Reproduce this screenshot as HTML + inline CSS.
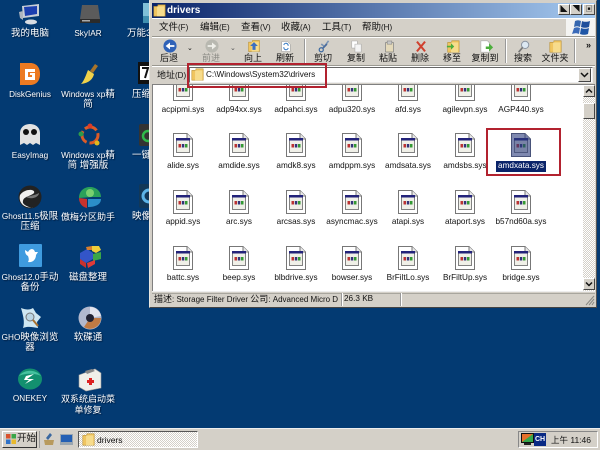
<!DOCTYPE html>
<html><head><meta charset="utf-8"><style>
html,body{margin:0;padding:0;width:600px;height:450px;overflow:hidden;background:#033a72}
#r{position:relative;width:600px;height:450px;overflow:hidden;font:9px/10px "Liberation Sans","Noto Sans CJK SC",sans-serif;filter:blur(.35px)}
#r div,#r svg{position:absolute}
i{font-style:normal;font-size:9.5px}
.d{width:68px;text-align:center;color:#fff;text-shadow:1px 1px 1px #001a3a;font-size:8.2px;line-height:10px;white-space:nowrap}
.f{width:56px;text-align:center;color:#111;font-size:8.2px;line-height:10px;white-space:nowrap}
.m{top:23px;font-size:8px;color:#111;white-space:nowrap}
.t{top:53px;width:40px;text-align:center;font-size:9px;color:#111;white-space:nowrap}
.sep{top:39px;width:1px;height:24px;background:#999;border-right:1px solid #fff}
.rb{border:2px solid #b2222f;box-sizing:border-box}
.dith{background:repeating-conic-gradient(#d4d0c8 0 25%,#fff 0 50%) 0 0/2px 2px}
</style></head><body><div id="r">
<svg width="0" height="0"><defs>
<symbol id="sys" viewBox="0 0 20 24"><path d="M.5.5H14L19.500 6V23.500H.5Z" fill="#fff" stroke="#777"/><path d="M14 .5V6H19.500" fill="#e8e8e8" stroke="#777"/><rect x="3.500" y="5.500" width="13" height="14" fill="#f0f0e8" stroke="#666" stroke-width=".8"/><rect x="3" y="5" width="14" height="2.500" fill="#23237a"/><rect x="5.500" y="11" width="2.500" height="3.500" fill="#b33"/><rect x="8.800" y="11" width="2.500" height="3.500" fill="#337"/><rect x="12" y="11" width="2.500" height="3.500" fill="#393"/></symbol>
<symbol id="fold" viewBox="0 0 16 16"><path d="M1 15V3H6V1H15V15Z" fill="#f0c560" stroke="#b98f2e" stroke-width=".7"/><rect x="5" y="3" width="9" height="12" fill="#f7dc8c"/></symbol>
</defs></svg>

<!-- desktop column icons -->
<svg style="left:18px;top:3px" width="24" height="22" viewBox="0 0 24 22"><path d="M4 3L21 1V13L5 15Z" fill="#c9ced6"/><path d="M6 4L19 3V11L7 13Z" fill="#1c3fb0"/><path d="M1 9L5 8V17L2 15Z" fill="#aeb5c0"/><ellipse cx="13" cy="19" rx="6" ry="2.500" fill="#d8dce2"/></svg>
<div class="d" style="left:-4px;top:29px"><i>我的电脑</i></div>
<svg style="left:79px;top:4px" width="22" height="20" viewBox="0 0 22 20"><path d="M3 1H19L21 15H1Z" fill="#5b5b5b"/><rect x="1" y="15" width="20" height="4" fill="#2b2b2b"/><rect x="3" y="16" width="8" height="1.500" fill="#aaa"/></svg>
<div class="d" style="left:54px;top:29px">SkyIAR</div>
<svg style="left:143px;top:3px" width="7" height="20" viewBox="0 0 7 20"><rect width="7" height="20" fill="#7fc0d8"/><rect y="13" width="7" height="7" fill="#3f8fb0"/></svg>
<div class="d" style="left:127px;top:29px;text-align:left"><i>万能3</i></div>

<svg style="left:19px;top:62px" width="22" height="24" viewBox="0 0 22 24"><path d="M1 1H11C18 1 21 6 21 12S18 23 11 23H1Z" fill="#ec7a22"/><path d="M6 7H16V10H9V15H13V13H11V11H16V18H6Z" fill="#fff"/></svg>
<div class="d" style="left:-4px;top:90px">DiskGenius</div>
<svg style="left:79px;top:62px" width="22" height="24" viewBox="0 0 22 24"><path d="M16 2L19 4L14 11L11 9Z" fill="#a8742a"/><path d="M9 8L15 12C14 17 10 21 2 22C5 19 7 13 9 8Z" fill="#f0d24a"/></svg>
<div class="d" style="left:54px;top:90px">Windows xp<i>精</i><br><i>简</i></div>
<svg style="left:138px;top:62px" width="12" height="22" viewBox="0 0 12 22"><rect width="12" height="22" fill="#111"/><rect x="2" y="4" width="10" height="14" fill="#fff"/><path d="M4 6H10L7 16" fill="none" stroke="#111" stroke-width="2"/></svg>
<div class="d" style="left:132px;top:90px;text-align:left"><i>压缩</i></div>

<svg style="left:19px;top:123px" width="22" height="23" viewBox="0 0 22 23"><path d="M1 22V10C1 4 6 1 11 1S21 4 21 10V22L17 20L14 22L11 20L8 22L5 20Z" fill="#e2e2e2"/><circle cx="7" cy="9" r="3" fill="#111"/><circle cx="15" cy="9" r="3" fill="#111"/></svg>
<div class="d" style="left:-4px;top:151px">EasyImag</div>
<svg style="left:78px;top:123px" width="24" height="24" viewBox="0 0 24 24"><circle cx="12" cy="12" r="8" fill="none" stroke="#dc5b27" stroke-width="3" stroke-dasharray="13 3"/><circle cx="12" cy="3" r="2.500" fill="#dc3b27"/><circle cx="3" cy="11" r="2.500" fill="#2d9b4a"/><circle cx="19" cy="20" r="2.500" fill="#e2b71e"/></svg>
<div class="d" style="left:54px;top:151px">Windows xp<i>精</i><br><i>简 增强版</i></div>
<svg style="left:139px;top:124px" width="11" height="22" viewBox="0 0 11 22"><rect width="11" height="22" rx="2" fill="#333"/><circle cx="9" cy="12" r="5" fill="none" stroke="#2fb84a" stroke-width="2.500"/></svg>
<div class="d" style="left:132px;top:151px;text-align:left"><i>一键</i></div>

<svg style="left:18px;top:185px" width="24" height="24" viewBox="0 0 24 24"><circle cx="12" cy="12" r="11.500" fill="#222"/><path d="M2 10C7 3 18 4 16 8C12 12 4 11 5 18C7 21 12 23 15 22C7 24 0 18 2 10Z" fill="#f0f0f0"/><path d="M8 12C13 11 20 9 21 8C21 12 14 15 8 12Z" fill="#777"/></svg>
<div class="d" style="left:-4px;top:212px">Ghost11.5<i>极限</i><br><i>压缩</i></div>
<svg style="left:78px;top:186px" width="24" height="22" viewBox="0 0 24 22"><path d="M1 12C1 5 6 1 12 1S23 5 23 11L14 11Z" fill="#2aa05a"/><path d="M1 12L9 13V22C4 21 1 17 1 12Z" fill="#c8322e"/><path d="M10 13H23C23 18 18 21 10 21Z" fill="#2b8ec9"/><circle cx="12" cy="7" r="4" fill="#79d070"/></svg>
<div class="d" style="left:54px;top:212px"><i style="font-size:9px">傲梅分区助手</i></div>
<svg style="left:139px;top:184px" width="11" height="24" viewBox="0 0 11 24"><rect width="11" height="24" rx="2" fill="#123858"/><circle cx="10" cy="12" r="6" fill="none" stroke="#5db4e8" stroke-width="3"/></svg>
<div class="d" style="left:132px;top:212px;text-align:left"><i>映像</i></div>

<svg style="left:19px;top:244px" width="23" height="23" viewBox="0 0 23 23"><rect width="23" height="23" rx="1" fill="#3f9bdf"/><path d="M6 6L9 8C11 4 15 4 16 8L19 8L17 11C17 15 14 19 9 18C10 16 10 15 9 12C7 11 6 9 6 6Z" fill="#fff"/></svg>
<div class="d" style="left:-4px;top:273px">Ghost12.0<i>手动</i><br><i>备份</i></div>
<svg style="left:79px;top:245px" width="23" height="23" viewBox="0 0 23 23"><path d="M1 8L8 4L14 8V14L7 18L1 14Z" fill="#3355c8"/><path d="M13 1H20L22 5L17 8L13 6Z" fill="#efce3a"/><path d="M14 9L22 7V14L14 16Z" fill="#3aa648"/><path d="M1 14L7 18V23L1 19Z" fill="#c8322e"/><path d="M8 18L16 15V19L9 23Z" fill="#e03a38"/><path d="M7 2L13 1V5L8 5Z" fill="#d77e2e"/></svg>
<div class="d" style="left:54px;top:273px"><i>磁盘整理</i></div>

<svg style="left:19px;top:307px" width="23" height="23" viewBox="0 0 23 23"><path d="M2 1C7 3 11 3 14 1L17 6L22 10L18 15L19 21C13 20 9 19 4 21C6 15 4 8 2 1Z" fill="#cfe7f2"/><circle cx="11" cy="10" r="4" fill="#bcd6e4" stroke="#777"/><path d="M14 13L19 19" stroke="#a9702f" stroke-width="2"/></svg>
<div class="d" style="left:-4px;top:333px">GHO<i>映像浏览</i><br><i>器</i></div>
<svg style="left:78px;top:306px" width="24" height="24" viewBox="0 0 24 24"><circle cx="12" cy="12" r="11.500" fill="#b2b8ce"/><path d="M12 12L23 12A11 11 0 0 1 6 21Z" fill="#c07a44"/><path d="M12 12L12 1A11 11 0 0 1 23 10Z" fill="#e2e4ee"/><circle cx="12" cy="12" r="4" fill="#223"/></svg>
<div class="d" style="left:54px;top:333px"><i>软碟通</i></div>

<svg style="left:18px;top:368px" width="24" height="22" viewBox="0 0 24 22"><ellipse cx="12" cy="11" rx="12" ry="10.500" fill="#13906f"/><path d="M1 8C6 1 18 1 23 8C18 5 6 5 1 8Z" fill="#46c2a0"/><path d="M8 8L16 6L9 11L16 11L7 16L11 12H6Z" fill="#fff"/></svg>
<div class="d" style="left:-4px;top:394px">ONEKEY</div>
<svg style="left:78px;top:368px" width="24" height="24" viewBox="0 0 24 24"><path d="M1 7L17 1L23 5V20L8 23L1 19Z" fill="#f0efe9" stroke="#999" stroke-width=".6"/><path d="M7 3L14 1L17 3L9 6Z" fill="#888"/><path d="M9 12H11V10H14V12H16V15H14V17H11V15H9Z" fill="#d22"/></svg>
<div class="d" style="left:54px;top:394px"><i style="font-size:9px">双系统启动菜</i><br><i style="font-size:9px">单修复</i></div>

<!-- window -->
<div style="left:149px;top:0;width:448px;height:308px;background:#d4d0c8;border-top:1px solid #d4d0c8;border-left:1px solid #e8e6e0;border-right:1px solid #555;border-bottom:1px solid #444;box-sizing:border-box"></div>
<div style="left:152px;top:3px;width:443px;height:15px;background:linear-gradient(90deg,#0a246a,#a6caf0)"></div>
<svg style="left:153px;top:4px" width="13" height="13"><use href="#fold"/></svg>
<div style="left:167px;top:5px;color:#fff;font:bold 10px/11px 'Liberation Sans',sans-serif">drivers</div>
<div style="left:558px;top:4px;width:12px;height:11px;background:#d4d0c8;border:1px solid;border-color:#fff #444 #444 #fff;box-sizing:border-box;font-size:7px;line-height:9px;text-align:center;color:#111">◣</div>
<div style="left:570px;top:4px;width:12px;height:11px;background:#d4d0c8;border:1px solid;border-color:#fff #444 #444 #fff;box-sizing:border-box;font-size:7px;line-height:9px;text-align:center;color:#111">◥</div>
<div style="left:583px;top:4px;width:12px;height:11px;background:#d4d0c8;border:1px solid;border-color:#fff #444 #444 #fff;box-sizing:border-box;font-size:7px;line-height:9px;text-align:center;color:#111">▣</div>

<!-- menu -->
<div style="left:152px;top:18px;width:443px;height:1px;background:#fff"></div>
<div style="left:152px;top:36px;width:443px;height:1px;background:#9a9890"></div>
<div style="left:152px;top:37px;width:443px;height:1px;background:#fff"></div>
<div class="m" style="left:159px"><i>文件</i>(F)</div><div class="m" style="left:200px"><i>编辑</i>(E)</div><div class="m" style="left:241px"><i>查看</i>(V)</div><div class="m" style="left:281px"><i>收藏</i>(A)</div><div class="m" style="left:322px"><i>工具</i>(T)</div><div class="m" style="left:362px"><i>帮助</i>(H)</div>
<div style="left:566px;top:19px;width:29px;height:17px;background:#f4f4f2"></div>
<svg style="left:572px;top:20px" width="18" height="15" viewBox="0 0 18 15"><path d="M3 1C5 0 7 0 9 1L8 7C6 6 4 6 2 7Z" fill="#3566ae"/><path d="M10 1C12 2 15 2 18 1L17 7C14 8 12 8 9 7Z" fill="#1f4f9c"/><path d="M2 8C4 7 6 7 8 8L7 14C5 13 3 13 0 14Z" fill="#3a6ab8"/><path d="M9 8C12 9 14 9 17 8L16 14C13 15 11 15 8 14Z" fill="#1f56a6"/></svg>

<!-- toolbar -->
<svg style="left:163px;top:39px" width="14" height="14" viewBox="0 0 16 16"><circle cx="8" cy="8" r="7.500" fill="#2f62b8"/><path d="M3 8L8 4V7H13V9H8V12Z" fill="#fff"/></svg>
<div class="t" style="left:149px">后退</div>
<div style="left:187px;top:44px;font-size:7px;color:#111">⌄</div>
<svg style="left:205px;top:39px" width="14" height="14" viewBox="0 0 16 16"><circle cx="8" cy="8" r="7.500" fill="#b8b8b0"/><path d="M13 8L8 4V7H3V9H8V12Z" fill="#f0f0ea"/></svg>
<div class="t" style="left:191px;color:#8a8a84">前进</div>
<div style="left:230px;top:44px;font-size:7px;color:#555">⌄</div>
<svg style="left:247px;top:39px" width="14" height="14" viewBox="0 0 18 16"><use href="#fold" width="16" height="16" x="1"/><path d="M9 3L14 8H11V13H7V8H4Z" fill="#3d6fc0"/></svg>
<div class="t" style="left:233px">向上</div>
<svg style="left:281px;top:40px" width="10" height="13" viewBox="0 0 14 16"><path d="M1 1H9L13 5V15H1Z" fill="#fff" stroke="#999" stroke-width=".7"/><path d="M4 6A3 3 0 0 1 10 7M10 10A3 3 0 0 1 4 9" stroke="#3a7cc4" fill="none" stroke-width="1.500"/></svg>
<div class="t" style="left:265px">刷新</div>
<div class="sep" style="left:304px"></div>
<svg style="left:318px;top:40px" width="13" height="13" viewBox="0 0 16 16"><path d="M13 1L8 8L4 5M13 1" stroke="#7a94b4" fill="none" stroke-width="2"/><circle cx="4" cy="12" r="2.500" fill="none" stroke="#3a68a0" stroke-width="1.500"/><path d="M6 10L11 5" stroke="#4b6c9c" stroke-width="2"/></svg>
<div class="t" style="left:303px">剪切</div>
<svg style="left:351px;top:40px" width="11" height="13" viewBox="0 0 14 16"><path d="M1 1H8V10H1Z" fill="#fff" stroke="#aaa" stroke-width=".7"/><path d="M5 5H13V15H5Z" fill="#f4f4f4" stroke="#aaa" stroke-width=".7"/></svg>
<div class="t" style="left:336px">复制</div>
<svg style="left:384px;top:40px" width="11" height="13" viewBox="0 0 14 16"><rect x="2" y="3" width="10" height="12" fill="#e4d9ba" stroke="#777" stroke-width=".8"/><rect x="4" y="1" width="6" height="4" fill="#c7c7c7" stroke="#777" stroke-width=".6"/></svg>
<div class="t" style="left:368px">粘贴</div>
<svg style="left:415px;top:40px" width="12" height="13" viewBox="0 0 14 16"><path d="M2 2L12 14M12 2L2 14" stroke="#d0402e" stroke-width="2.500"/></svg>
<div class="t" style="left:400px">删除</div>
<svg style="left:446px;top:40px" width="14" height="13" viewBox="0 0 17 16"><use href="#fold" width="16" height="16" x="1"/><path d="M1 7H6V4L10 8L6 12V9H1Z" fill="#4cae3c"/></svg>
<div class="t" style="left:432px">移至</div>
<svg style="left:480px;top:40px" width="14" height="13" viewBox="0 0 17 16"><path d="M1 1H9L12 4V15H1Z" fill="#fff" stroke="#aaa" stroke-width=".7"/><path d="M7 8H11V4L16 9L11 14V11H7Z" fill="#4cae3c"/></svg>
<div class="t" style="left:465px">复制到</div>
<div class="sep" style="left:505px"></div>
<svg style="left:517px;top:40px" width="13" height="13" viewBox="0 0 16 16"><circle cx="10" cy="6" r="4.500" fill="#dce8f2" stroke="#8a93a0" stroke-width="1.200"/><path d="M7 9L2 15" stroke="#777" stroke-width="2"/></svg>
<div class="t" style="left:503px">搜索</div>
<svg style="left:549px;top:40px" width="13" height="13"><use href="#fold"/></svg>
<div class="t" style="left:535px">文件夹</div>
<div class="sep" style="left:574px"></div>
<div style="left:586px;top:40px;font-size:9px;font-weight:bold;color:#111">»</div>

<!-- address -->
<div style="left:152px;top:65px;width:443px;height:1px;background:#9a9890"></div>
<div style="left:152px;top:66px;width:443px;height:1px;background:#fff"></div>
<div style="left:157px;top:70px;font-size:8px;color:#111"><i style="font-size:9px">地址</i>(D)</div>
<div style="left:189px;top:67px;width:404px;height:16px;background:#fff;border:1px solid;border-color:#666 #eee #eee #666;box-sizing:border-box"></div>
<svg style="left:191px;top:68px" width="13" height="13"><use href="#fold"/></svg>
<div style="left:206px;top:70px;font-size:8.2px;color:#111;white-space:nowrap">C:\Windows\System32\drivers</div>
<div style="left:578px;top:68px;width:13px;height:14px;background:#d4d0c8;border:1px solid;border-color:#fff #444 #444 #fff;box-sizing:border-box"></div>
<svg style="left:580px;top:72px" width="9" height="6"><path d="M1 1L4.500 4.500L8 1" fill="none" stroke="#111" stroke-width="1.500"/></svg>

<!-- content -->
<div style="left:152px;top:84px;width:443px;height:207px;background:#fff;border-top:1px solid #808080;border-left:1px solid #808080;box-sizing:border-box"></div>
<svg style="left:173px;top:85px" width="20" height="16" viewBox="0 8 20 16"><use href="#sys" width="20" height="24"/></svg>
<svg style="left:229px;top:85px" width="20" height="16" viewBox="0 8 20 16"><use href="#sys" width="20" height="24"/></svg>
<svg style="left:286px;top:85px" width="20" height="16" viewBox="0 8 20 16"><use href="#sys" width="20" height="24"/></svg>
<svg style="left:342px;top:85px" width="20" height="16" viewBox="0 8 20 16"><use href="#sys" width="20" height="24"/></svg>
<svg style="left:398px;top:85px" width="20" height="16" viewBox="0 8 20 16"><use href="#sys" width="20" height="24"/></svg>
<svg style="left:455px;top:85px" width="20" height="16" viewBox="0 8 20 16"><use href="#sys" width="20" height="24"/></svg>
<svg style="left:511px;top:85px" width="20" height="16" viewBox="0 8 20 16"><use href="#sys" width="20" height="24"/></svg>
<div class="f" style="left:155px;top:105px">acpipmi.sys</div><div class="f" style="left:211px;top:105px">adp94xx.sys</div><div class="f" style="left:268px;top:105px">adpahci.sys</div><div class="f" style="left:324px;top:105px">adpu320.sys</div><div class="f" style="left:380px;top:105px">afd.sys</div><div class="f" style="left:437px;top:105px">agilevpn.sys</div><div class="f" style="left:493px;top:105px">AGP440.sys</div>

<svg style="left:173px;top:133px" width="20" height="24"><use href="#sys"/></svg>
<svg style="left:229px;top:133px" width="20" height="24"><use href="#sys"/></svg>
<svg style="left:286px;top:133px" width="20" height="24"><use href="#sys"/></svg>
<svg style="left:342px;top:133px" width="20" height="24"><use href="#sys"/></svg>
<svg style="left:398px;top:133px" width="20" height="24"><use href="#sys"/></svg>
<svg style="left:455px;top:133px" width="20" height="24"><use href="#sys"/></svg>
<svg style="left:511px;top:133px" width="20" height="24"><use href="#sys"/></svg>
<div style="left:511px;top:133px;width:20px;height:24px;background:#2a3a7c;opacity:.6;clip-path:polygon(0 0,70% 0,100% 25%,100% 100%,0 100%)"></div>
<div class="f" style="left:155px;top:161px">alide.sys</div><div class="f" style="left:211px;top:161px">amdide.sys</div><div class="f" style="left:268px;top:161px">amdk8.sys</div><div class="f" style="left:324px;top:161px">amdppm.sys</div><div class="f" style="left:380px;top:161px">amdsata.sys</div><div class="f" style="left:437px;top:161px">amdsbs.sys</div>
<div style="left:496px;top:161px;width:50px;height:11px;background:#0a246a"></div>
<div class="f" style="left:493px;top:161px;color:#fff">amdxata.sys</div>
<div class="rb" style="left:486px;top:128px;width:75px;height:48px"></div>

<svg style="left:173px;top:190px" width="20" height="24"><use href="#sys"/></svg>
<svg style="left:229px;top:190px" width="20" height="24"><use href="#sys"/></svg>
<svg style="left:286px;top:190px" width="20" height="24"><use href="#sys"/></svg>
<svg style="left:342px;top:190px" width="20" height="24"><use href="#sys"/></svg>
<svg style="left:398px;top:190px" width="20" height="24"><use href="#sys"/></svg>
<svg style="left:455px;top:190px" width="20" height="24"><use href="#sys"/></svg>
<svg style="left:511px;top:190px" width="20" height="24"><use href="#sys"/></svg>
<div class="f" style="left:155px;top:217px">appid.sys</div><div class="f" style="left:211px;top:217px">arc.sys</div><div class="f" style="left:268px;top:217px">arcsas.sys</div><div class="f" style="left:324px;top:217px">asyncmac.sys</div><div class="f" style="left:380px;top:217px">atapi.sys</div><div class="f" style="left:437px;top:217px">ataport.sys</div><div class="f" style="left:493px;top:217px">b57nd60a.sys</div>

<svg style="left:173px;top:246px" width="20" height="24"><use href="#sys"/></svg>
<svg style="left:229px;top:246px" width="20" height="24"><use href="#sys"/></svg>
<svg style="left:286px;top:246px" width="20" height="24"><use href="#sys"/></svg>
<svg style="left:342px;top:246px" width="20" height="24"><use href="#sys"/></svg>
<svg style="left:398px;top:246px" width="20" height="24"><use href="#sys"/></svg>
<svg style="left:455px;top:246px" width="20" height="24"><use href="#sys"/></svg>
<svg style="left:511px;top:246px" width="20" height="24"><use href="#sys"/></svg>
<div class="f" style="left:155px;top:273px">battc.sys</div><div class="f" style="left:211px;top:273px">beep.sys</div><div class="f" style="left:268px;top:273px">blbdrive.sys</div><div class="f" style="left:324px;top:273px">bowser.sys</div><div class="f" style="left:380px;top:273px">BrFiltLo.sys</div><div class="f" style="left:437px;top:273px">BrFiltUp.sys</div><div class="f" style="left:493px;top:273px">bridge.sys</div>

<!-- scrollbar -->
<div class="dith" style="left:583px;top:85px;width:12px;height:206px"></div>
<div style="left:583px;top:85px;width:12px;height:12px;background:#d4d0c8;border:1px solid;border-color:#fff #444 #444 #fff;box-sizing:border-box"></div>
<svg style="left:585px;top:88px" width="8" height="6"><path d="M1 4.500L4 1.500L7 4.500" fill="none" stroke="#111" stroke-width="1.500"/></svg>
<div style="left:583px;top:103px;width:12px;height:16px;background:#d4d0c8;border:1px solid;border-color:#fff #444 #444 #fff;box-sizing:border-box"></div>
<div style="left:583px;top:278px;width:12px;height:12px;background:#d4d0c8;border:1px solid;border-color:#fff #444 #444 #fff;box-sizing:border-box"></div>
<svg style="left:585px;top:281px" width="8" height="6"><path d="M1 1.500L4 4.500L7 1.500" fill="none" stroke="#111" stroke-width="1.500"/></svg>

<!-- status -->
<div style="left:152px;top:291px;width:443px;height:1px;background:#eee"></div>
<div style="left:152px;top:293px;width:443px;height:1px;background:#a8a69e"></div>
<div style="left:341px;top:293px;width:1px;height:13px;background:#999"></div>
<div style="left:342px;top:293px;width:1px;height:13px;background:#fff"></div>
<div style="left:400px;top:293px;width:1px;height:13px;background:#999"></div>
<div style="left:401px;top:293px;width:1px;height:13px;background:#fff"></div>
<div style="left:154px;top:294px;width:186px;font-size:8px;color:#111;white-space:nowrap;overflow:hidden"><i style="font-size:9px">描述</i>: Storage Filter Driver <i style="font-size:9px">公司</i>: Advanced Micro D</div>
<div style="left:344px;top:294px;font-size:8.2px;color:#111">26.3 KB</div>
<svg style="left:585px;top:295px" width="10" height="11"><path d="M9 1L1 10M9 4L4 10M9 7L7 10" stroke="#8a8a84"/></svg>

<div class="rb" style="left:187px;top:63px;width:140px;height:25px"></div>

<!-- taskbar -->
<div style="left:0;top:428px;width:600px;height:22px;background:#d4d0c8;border-top:1px solid #eee;box-sizing:border-box"></div>
<div style="left:2px;top:431px;width:35px;height:17px;background:#d4d0c8;border:1px solid;border-color:#fff #333 #333 #fff;box-sizing:border-box"></div>
<svg style="left:5px;top:433px" width="12" height="12" viewBox="0 0 12 12"><rect x="1" y="1" width="4.500" height="4.500" fill="#d9522c"/><rect x="6.500" y="1" width="4.500" height="4.500" fill="#3aa648"/><rect x="1" y="6.500" width="4.500" height="4.500" fill="#2f72c8"/><rect x="6.500" y="6.500" width="4.500" height="4.500" fill="#e8b92c"/></svg>
<div style="left:17px;top:434px;font-size:9.500px;color:#111">开始</div>
<div style="left:39px;top:431px;width:1px;height:17px;background:#999"></div>
<svg style="left:43px;top:432px" width="12" height="14" viewBox="0 0 12 14"><path d="M7 1L9 3L5 8L3 6Z" fill="#3a68a0"/><path d="M1 8H11L10 13H2Z" fill="#b89a5c"/></svg>
<svg style="left:60px;top:434px" width="13" height="11" viewBox="0 0 13 11"><rect width="13" height="11" fill="#9aa6b0"/><rect x="1" y="1" width="11" height="7" fill="#2460b4"/></svg>
<div class="dith" style="left:78px;top:431px;width:120px;height:17px;border:1px solid;border-color:#555 #fff #fff #555;box-sizing:border-box"></div>
<svg style="left:82px;top:433px" width="13" height="13"><use href="#fold"/></svg>
<div style="left:97px;top:435px;font-size:8.500px;color:#111">drivers</div>
<div style="left:518px;top:431px;width:80px;height:17px;border:1px solid;border-color:#888 #fff #fff #888;box-sizing:border-box"></div>
<svg style="left:521px;top:433px" width="13" height="13" viewBox="0 0 13 13"><rect width="13" height="10" fill="#111"/><rect x="1" y="1" width="11" height="8" fill="#36a84c"/><path d="M1 1H12L1 9Z" fill="#e8702a"/><rect x="3" y="10" width="7" height="2" fill="#222"/></svg>
<div style="left:534px;top:433px;width:12px;height:13px;background:#0a2a84;color:#fff;font:bold 7px/13px 'Liberation Sans',sans-serif;text-align:center">CH</div>
<div style="left:551px;top:435px;font-size:8.500px;color:#111;white-space:nowrap">上午 11:46</div>
</div></body></html>
